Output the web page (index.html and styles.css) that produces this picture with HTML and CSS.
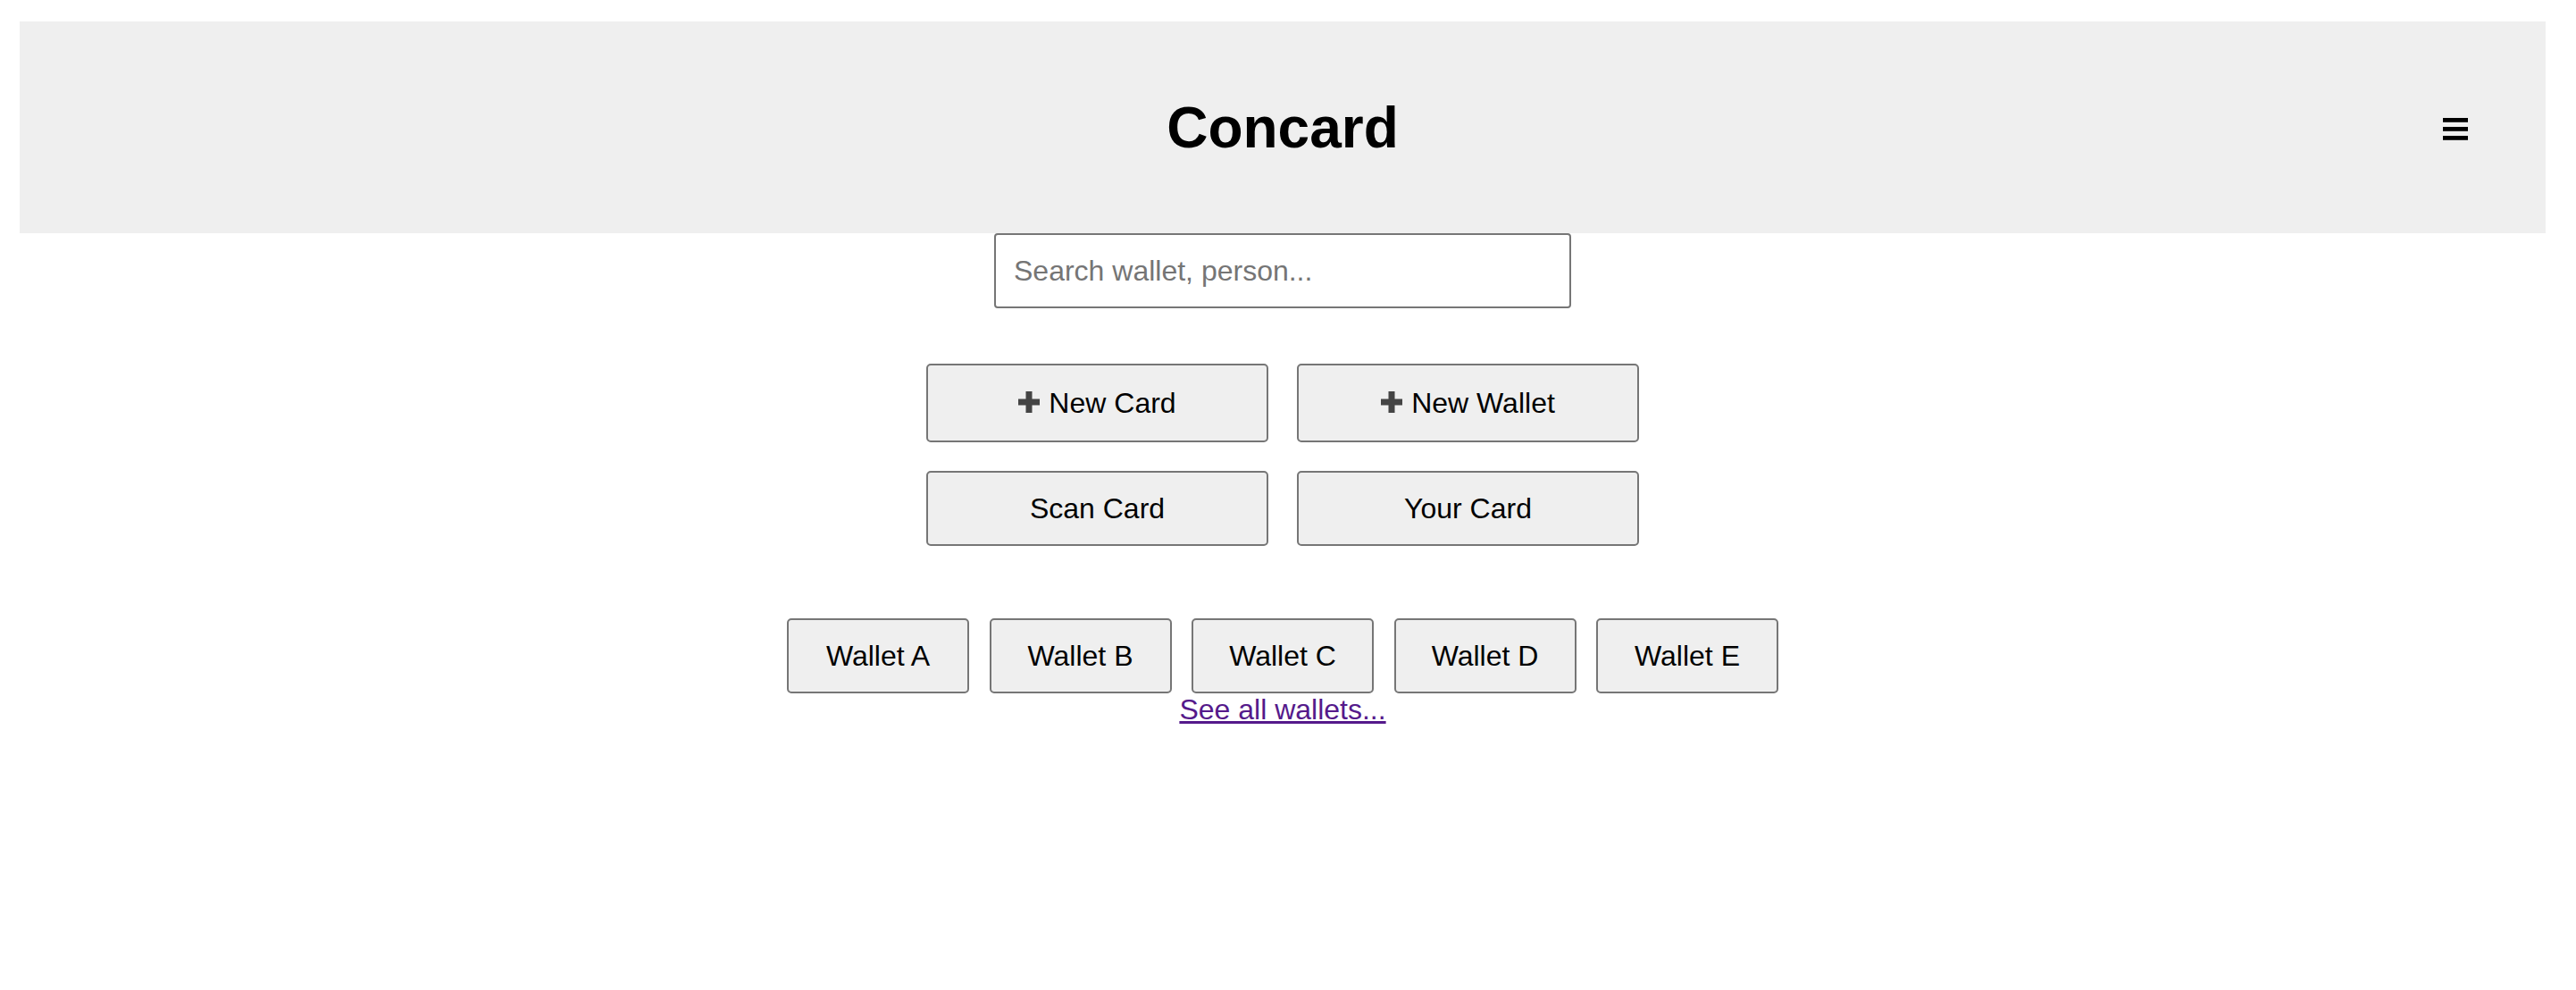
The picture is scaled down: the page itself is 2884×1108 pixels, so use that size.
FILE: index.html
```html
<!DOCTYPE html>
<html lang="en">
<head>
<meta charset="utf-8">
<title>Concard</title>
<link rel="stylesheet" href="styles.css">
</head>
<body>
<div class="page">
  <header class="topbar">
    <div class="topbar-spacer"></div>
    <h1 class="title">Concard</h1>
    <button class="menu" type="button" aria-label="Menu">
      <svg class="menu-icon" width="28" height="25" viewBox="0 0 28 25" aria-hidden="true">
        <rect x="0" y="0" width="28" height="4.8"/>
        <rect x="0" y="10" width="28" height="4.8"/>
        <rect x="0" y="20" width="28" height="4.8"/>
      </svg>
    </button>
  </header>
  <main class="content">
    <input class="search" type="text" placeholder="Search wallet, person...">
    <div class="actions">
      <button class="btn btn-icon" type="button">
        <svg class="plus" width="24" height="24" viewBox="0 0 24 24" aria-hidden="true">
          <rect x="8.5" y="0" width="7" height="24"/>
          <rect x="0" y="8.5" width="24" height="7"/>
        </svg>
        <span>New Card</span>
      </button>
      <button class="btn btn-icon" type="button">
        <svg class="plus" width="24" height="24" viewBox="0 0 24 24" aria-hidden="true">
          <rect x="8.5" y="0" width="7" height="24"/>
          <rect x="0" y="8.5" width="24" height="7"/>
        </svg>
        <span>New Wallet</span>
      </button>
      <button class="btn" type="button">Scan Card</button>
      <button class="btn" type="button">Your Card</button>
    </div>
    <div class="wallets">
      <button class="btn wallet" type="button">Wallet A</button>
      <button class="btn wallet" type="button">Wallet B</button>
      <button class="btn wallet" type="button">Wallet C</button>
      <button class="btn wallet" type="button">Wallet D</button>
      <button class="btn wallet" type="button">Wallet E</button>
    </div>
    <a class="see-all" href="#">See all wallets...</a>
  </main>
</div>
</body>
</html>
```

FILE: styles.css
```css
html, body {
  margin: 0;
  padding: 0;
  background: #ffffff;
}

body {
  font-family: "Liberation Sans", Arial, Helvetica, sans-serif;
  color: #000000;
}

.page {
  padding: 24px 34px 0 22px;
}

.topbar {
  height: 237px;
  background: #efefef;
  display: grid;
  grid-template-columns: 1fr auto 1fr;
  align-items: center;
  padding: 0 87px;
}

.title {
  margin: 0;
  font-size: 64px;
  font-weight: 700;
  line-height: normal;
  text-align: center;
}

.menu {
  justify-self: end;
  margin: 4px 0 0 0;
  padding: 0;
  border: 0;
  background: transparent;
  display: flex;
  line-height: 0;
}

.menu-icon {
  display: block;
  fill: #000000;
}

.content {
  display: flex;
  flex-direction: column;
  align-items: center;
}

.search {
  box-sizing: border-box;
  width: 646px;
  height: 84px;
  margin: 0;
  padding: 0 20px;
  border: 2px solid #767676;
  border-radius: 4px;
  font-family: "Liberation Sans", Arial, Helvetica, sans-serif;
  font-size: 32px;
  color: #000000;
  background: #ffffff;
}

.search::placeholder {
  color: #757575;
}

.actions {
  margin-top: 62px;
  display: grid;
  grid-template-columns: 383px 383px;
  column-gap: 32px;
  row-gap: 32px;
}

.btn {
  box-sizing: border-box;
  margin: 0;
  padding: 20px 0;
  border: 2px solid #767676;
  border-radius: 5px;
  background: #efefef;
  font-family: "Liberation Sans", Arial, Helvetica, sans-serif;
  font-size: 32px;
  line-height: 40px;
  color: #000000;
  text-align: center;
  display: flex;
  align-items: center;
  justify-content: center;
}

.btn-icon {
  padding: 22px 0;
}

.plus {
  display: block;
  fill: #444444;
  margin: 0 10px 3px 0;
  flex: none;
}

.wallets {
  margin-top: 81px;
  display: flex;
  gap: 22.5px;
}

.wallet {
  width: 204px;
}

.see-all {
  font-size: 32px;
  line-height: normal;
  color: #551a8b;
  text-decoration: underline;
}
```
